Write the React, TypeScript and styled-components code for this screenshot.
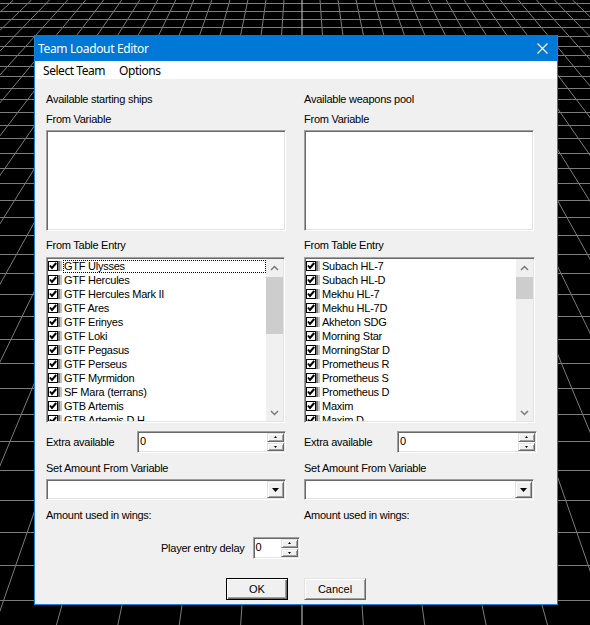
import React from 'react';
import styled, { createGlobalStyle, css } from 'styled-components';

const GlobalStyle = createGlobalStyle`
  html, body {
    margin: 0;
    padding: 0;
    background: #000;
  }
  body {
    width: 590px;
    height: 625px;
    overflow: hidden;
    font-family: "Liberation Sans", Arial, sans-serif;
  }
`;

const ships = [
  'GTF Ulysses', 'GTF Hercules', 'GTF Hercules Mark II', 'GTF Ares', 'GTF Erinyes', 'GTF Loki',
  'GTF Pegasus', 'GTF Perseus', 'GTF Myrmidon', 'SF Mara (terrans)', 'GTB Artemis', 'GTB Artemis D.H',
];

const weapons = [
  'Subach HL-7', 'Subach HL-D', 'Mekhu HL-7', 'Mekhu HL-7D', 'Akheton SDG', 'Morning Star',
  'MorningStar D', 'Prometheus R', 'Prometheus S', 'Prometheus D', 'Maxim', 'Maxim D',
];

// classic win32 3d edges
const sunken = css`
  box-sizing: border-box;
  border: 1px solid;
  border-color: #a0a0a0 #ffffff #ffffff #a0a0a0;
  box-shadow: inset 1px 1px 0 #696969, inset -1px -1px 0 #e3e3e3;
  padding: 1px;
  background: #fff;
`;

const raised = css`
  box-sizing: border-box;
  border: 1px solid;
  border-color: #e3e3e3 #696969 #696969 #e3e3e3;
  box-shadow: inset 1px 1px 0 #fff, inset -1px -1px 0 #a0a0a0;
  background: #f0f0f0;
`;

const Stage = styled.div`
  position: relative;
  width: 590px;
  height: 625px;
  box-sizing: border-box;
  padding: 35px 0 0 34px;
`;

const Backdrop = styled.svg`
  position: absolute;
  left: 0;
  top: 0;
`;

const Window = styled.div`
  position: relative;
  width: 524px;
  height: 570px;
  box-sizing: border-box;
  border: 1px solid #1883d7;
  background: #f0f0f0;
  display: flex;
  flex-direction: column;
`;

const TitleBar = styled.div`
  height: 25px;
  background: #0078d7;
  display: flex;
  align-items: center;
  padding-left: 3px;
  margin-top: -1px;
  padding-top: 1px;
  color: #fff;
  font-family: "Noto Sans", "Open Sans", sans-serif;
  font-size: 12px;
  letter-spacing: -0.35px;
`;

const TitleText = styled.div`
  flex: 1;
`;

const CloseBox = styled.div`
  width: 30px;
  height: 25px;
  display: flex;
  align-items: center;
  justify-content: center;
`;

const MenuBar = styled.div`
  height: 18px;
  background: #fff;
  display: flex;
  align-items: center;
  padding-left: 1px;
  font-family: "Noto Sans", "Open Sans", sans-serif;
  font-size: 12px;
  letter-spacing: -0.45px;
  color: #000;
`;

const MenuItem = styled.div`
  padding: 0 7px;
`;

const Body = styled.div`
  flex: 1;
  display: flex;
  flex-direction: column;
  padding: 14px 0 0 11px;
  font-size: 11px;
  letter-spacing: -0.25px;
  color: #000;
`;

const Columns = styled.div`
  display: grid;
  grid-template-columns: 240px 233px;
  column-gap: 18px;
`;

const Column = styled.div`
  display: flex;
  flex-direction: column;
`;

const Label = styled.div<{ $gap?: number }>`
  height: 13px;
  line-height: 13px;
  white-space: nowrap;
  margin-top: ${p => p.$gap ?? 0}px;
`;

const TextBox = styled.div<{ $w: number }>`
  ${sunken};
  width: ${p => p.$w}px;
  height: 101px;
  margin-top: 4px;
`;

const ListBox = styled.div<{ $w: number }>`
  ${sunken};
  width: ${p => p.$w}px;
  height: 166px;
  margin-top: 5px;
  display: flex;
  overflow: hidden;
`;

const Rows = styled.div`
  flex: 1;
  overflow: hidden;
  min-width: 0;
`;

const Row = styled.div`
  height: 14px;
  display: flex;
  align-items: center;
  white-space: nowrap;
`;

const RowText = styled.span<{ $focus?: boolean }>`
  flex: 1;
  height: 13px;
  line-height: 13px;
  padding-left: 1px;
  box-sizing: border-box;
  ${p => p.$focus && css`outline: 1px dotted #000; outline-offset: -1px;`}
`;

const ScrollBar = styled.div`
  width: 17px;
  display: flex;
  flex-direction: column;
  background: #f0f0f0;
`;

const ScrollArrow = styled.div`
  height: 17px;
  display: flex;
  align-items: center;
  justify-content: center;
`;

const ScrollTrack = styled.div`
  flex: 1;
  padding-top: 1px;
`;

const Thumb = styled.div<{ $h: number }>`
  height: ${p => p.$h}px;
  background: #cdcdcd;
`;

const SpinRow = styled.div`
  margin-top: 8px;
  display: flex;
  align-items: center;
  justify-content: space-between;
`;

const SpinBox = styled.div<{ $w: number }>`
  ${sunken};
  width: ${p => p.$w}px;
  height: 22px;
  display: flex;
`;

const SpinValue = styled.div`
  flex: 1;
  padding-left: 1px;
  line-height: 16px;
`;

const SpinButtons = styled.div`
  width: 17px;
  display: flex;
  flex-direction: column;
  gap: 1px;
`;

const SpinButton = styled.div`
  ${raised};
  flex: 1;
  display: flex;
  align-items: center;
  justify-content: center;
`;

const Combo = styled.div<{ $w: number }>`
  ${sunken};
  width: ${p => p.$w}px;
  height: 21px;
  margin-top: 4px;
  display: flex;
  justify-content: flex-end;
`;

const ComboButton = styled.div`
  ${raised};
  width: 17px;
  display: flex;
  align-items: center;
  justify-content: center;
`;

const DelayRow = styled.div`
  margin-top: 15px;
  padding-left: 115px;
  display: flex;
  align-items: center;
  gap: 8px;
`;

const ButtonRow = styled.div`
  margin-top: 19px;
  padding-right: 11px;
  display: flex;
  justify-content: center;
  gap: 16px;
`;

const PushButton = styled.div<{ $default?: boolean }>`
  ${raised};
  width: 62px;
  height: 22px;
  display: flex;
  align-items: center;
  justify-content: center;
  letter-spacing: 0;
  ${p => p.$default && css`
    border-color: #000;
    box-shadow: inset 1px 1px 0 #fff, inset -1px -1px 0 #696969, inset -2px -2px 0 #a0a0a0;
  `}
`;

const CheckIcon = () => (
  <svg width="15" height="12" viewBox="0 0 15 12">
    <rect x="0.5" y="1.5" width="9" height="9" fill="#fff" stroke="#000" />
    <path d="M2 5.5 L4 8 L8.2 3" fill="none" stroke="#000" strokeWidth="2" />
    <rect x="10" y="1" width="2" height="10" fill="#7a7a7a" />
    <rect x="12" y="1" width="2" height="10" fill="#c4c4c4" />
  </svg>
);

const Chevron = ({ up }: { up?: boolean }) => (
  <svg width="9" height="6" viewBox="0 0 9 6">
    <path d={up ? 'M1 5 L4.5 1.5 L8 5' : 'M1 1 L4.5 4.5 L8 1'} fill="none" stroke="#7a7a7a" strokeWidth="1.5" />
  </svg>
);

const Tri = ({ up, big }: { up?: boolean; big?: boolean }) => {
  const w = big ? 7 : 3;
  const h = big ? 4 : 2;
  return (
    <svg width={w} height={h} viewBox={`0 0 ${w} ${h}`}>
      <path d={up ? `M0 ${h} L${w / 2} 0 L${w} ${h}Z` : `M0 0 L${w} 0 L${w / 2} ${h}Z`} fill="#000" />
    </svg>
  );
};

const List = ({ items, w, thumb }: { items: string[]; w: number; thumb: number }) => (
  <ListBox $w={w}>
    <Rows>
      {items.map((t, i) => (
        <Row key={t}>
          <CheckIcon />
          <RowText $focus={i === 0 && w > 235}>{t}</RowText>
        </Row>
      ))}
    </Rows>
    <ScrollBar>
      <ScrollArrow><Chevron up /></ScrollArrow>
      <ScrollTrack><Thumb $h={thumb} /></ScrollTrack>
      <ScrollArrow><Chevron /></ScrollArrow>
    </ScrollBar>
  </ListBox>
);

const Spin = ({ w }: { w: number }) => (
  <SpinBox $w={w}>
    <SpinValue>0</SpinValue>
    <SpinButtons>
      <SpinButton><Tri up /></SpinButton>
      <SpinButton><Tri /></SpinButton>
    </SpinButtons>
  </SpinBox>
);

const Grid = () => {
  const hs: number[] = [];
  for (let y = 3; y < 625; y += 7.6 + 0.048 * y) hs.push(Math.round(y) + 0.5);
  const vs: number[][] = [];
  for (let k = -30; k <= 30; k++) {
    vs.push([302 + (60 * k * 260) / 865, 302 + (60 * k * 885) / 865, k]);
  }
  return (
    <Backdrop width="590" height="625" viewBox="0 0 590 625">
      <rect width="590" height="625" fill="#000" />
      {hs.map((y, i) => (
        <line key={'h' + i} x1="0" x2="590" y1={y} y2={y} stroke={Math.abs(y - 517) < 8 ? '#c8c8c8' : '#7c7c7c'} strokeWidth="1" />
      ))}
      {vs.map(([a, b, k]) => (
        <line key={'v' + k} x1={a} y1="0" x2={b} y2="625" stroke={k === 0 ? '#d0d0d0' : '#7c7c7c'} strokeWidth="1" />
      ))}
    </Backdrop>
  );
};

const Side = ({ title, items, w, thumb, spinW, comboW, textW }: {
  title: string; items: string[]; w: number; thumb: number; spinW: number; comboW: number; textW: number;
}) => (
  <Column>
    <Label>{title}</Label>
    <Label $gap={7}>From Variable</Label>
    <TextBox $w={textW} />
    <Label $gap={8}>From Table Entry</Label>
    <List items={items} w={w} thumb={thumb} />
    <SpinRow>
      <Label>Extra available</Label>
      <Spin w={spinW} />
    </SpinRow>
    <Label $gap={9}>Set Amount From Variable</Label>
    <Combo $w={comboW}>
      <ComboButton><Tri big /></ComboButton>
    </Combo>
    <Label $gap={9}>Amount used in wings:</Label>
  </Column>
);

export default function App() {
  return (
    <Stage>
      <GlobalStyle />
      <Grid />
      <Window>
        <TitleBar>
          <TitleText>Team Loadout Editor</TitleText>
          <CloseBox>
            <svg width="11" height="11" viewBox="0 0 11 11">
              <path d="M0.5 0.5 L10.5 10.5 M10.5 0.5 L0.5 10.5" stroke="#fff" strokeWidth="1.1" />
            </svg>
          </CloseBox>
        </TitleBar>
        <MenuBar>
          <MenuItem>Select Team</MenuItem>
          <MenuItem>Options</MenuItem>
        </MenuBar>
        <Body>
          <Columns>
            <Side title="Available starting ships" items={ships} w={239} thumb={57} spinW={149} comboW={240} textW={240} />
            <Side title="Available weapons pool" items={weapons} w={231} thumb={22} spinW={140} comboW={230} textW={230} />
          </Columns>
          <DelayRow>
            <Label>Player entry delay</Label>
            <Spin w={47} />
          </DelayRow>
          <ButtonRow>
            <PushButton $default>OK</PushButton>
            <PushButton>Cancel</PushButton>
          </ButtonRow>
        </Body>
      </Window>
    </Stage>
  );
}
